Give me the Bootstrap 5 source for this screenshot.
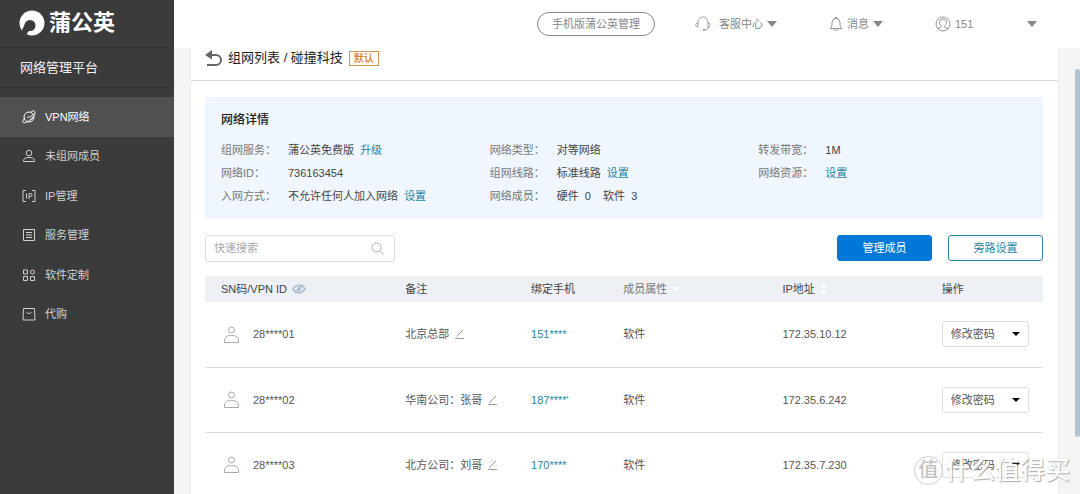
<!DOCTYPE html>
<html lang="zh-CN">
<head>
<meta charset="utf-8">
<meta name="viewport" content="width=device-width, initial-scale=1">
<title>蒲公英 网络管理平台</title>
<link href="https://cdn.jsdelivr.net/npm/bootstrap@5.3.0/dist/css/bootstrap.min.css" rel="stylesheet">
<style>
body{font-family:"Liberation Sans","Noto Sans CJK SC",sans-serif;font-size:11px;line-height:16px;color:#555;background:#f4f4f4}
svg{flex:none;fill:none}
svg:not([stroke]){stroke:currentColor}
a{color:#2585a8;text-decoration:none}
.side{width:174px;background:#3b3b3b;color:#d0d0d0}
.brand-row{height:48px;padding-left:19px;padding-bottom:1px;border-bottom:1px solid #333;color:#fff;font-size:22px;font-weight:700;gap:4px}
.platform{height:40px;padding-left:20px;border-bottom:1px solid #333;color:#f2f2f2;font-size:13px;margin-bottom:9px}
.menu{display:grid;grid-auto-rows:1fr;height:237px}
.menu a{color:#d0d0d0;padding-left:22px;gap:9px;height:100%}
.menu a.active{background:#505050;color:#fff}
.topbar{height:48px;background:#fff;color:#888;padding-right:43px}
.topbar .btn{--bs-btn-font-size:11px;--bs-btn-padding-y:0;--bs-btn-padding-x:14px;--bs-btn-color:#888;--bs-btn-border-color:#888;line-height:22px}
.topbar a{color:#888}
.account{width:68px}
.tri{width:0;height:0;border:5px solid transparent;border-top:6px solid #888;border-bottom:0}
.sheet{background:#fff;border:solid #eaeaea;border-width:0 1px;min-width:0}
.crumb{height:33px;padding:0 16px 12px 14px;border-bottom:1px solid #ddd;font-size:13px;color:#222;gap:6px}
.crumb a{color:#222}
.tag{font-size:10px;line-height:13px;border:1px solid #dc9354;color:#d77a2c;font-weight:500;padding:0 4px}
.sheet-body{padding:16px 15px 0 14px}
.detail{background:#eff6fe;border-radius:3px;padding:14px 16px 12px;margin-bottom:16px}
.detail h2{font-size:12px;line-height:18px;color:#222;font-weight:500;margin-bottom:10px}
.detail dl{display:grid;grid-template-columns:67px 1fr;row-gap:1px;line-height:22px}
.detail dt{font-weight:400;color:#777}
.detail dd{margin:0;color:#444;white-space:pre}
.tools{margin-bottom:14px}
.find{width:190px;height:27px;border:1px solid #ddd;border-radius:3px;padding:0 10px 0 8px}
.find input{font-size:11px;padding:0;border:0;box-shadow:none!important;min-height:0}
.find input::placeholder{color:#aaa}
.act{--bs-btn-font-size:11px;--bs-btn-padding-y:0;--bs-btn-border-radius:3px;width:95px;line-height:24px}
.act.btn-primary{--bs-btn-bg:#0078d7;--bs-btn-border-color:#0078d7}
.act.btn-outline-primary{--bs-btn-color:#2585a8;--bs-btn-border-color:#2585a8}
.members{table-layout:fixed;--bs-table-color:#555;margin:0}
.members th,.members td{padding:0 0 0 16px;vertical-align:middle;white-space:nowrap}
.members th{height:26px;background:#edf0f4;color:#444;font-weight:400;border:0}
.members td{height:65px;border-bottom:1px solid #ddd}
.members th .d-flex{gap:5px}
.members td .d-flex{gap:6px}
.members .who{gap:14px!important;padding-left:3px}
.members select{width:87px;height:26px;font-size:11px;line-height:16px;color:#555;padding:0 20px 0 8px;border-color:#ddd;border-radius:3px;
--bs-form-select-bg-img:url("data:image/svg+xml,%3Csvg xmlns='http://www.w3.org/2000/svg' viewBox='0 0 8 8'%3E%3Cpath d='M0 2h8L4 6z'/%3E%3C/svg%3E");background-image:var(--bs-form-select-bg-img);background-size:8px 8px;background-position:right 8px center}
.rail{width:21px;padding-top:21px}
.thumb{width:5px;height:368px;border-radius:3px;background:#b2c3d1}
.stamp{right:10px;bottom:8px;color:#fff;font-size:25px;line-height:32px;font-weight:500;text-shadow:1px 1px 1px #aaa,0 0 1px #ccc;pointer-events:none;gap:2px}
.stamp span{width:29px;height:29px;line-height:26px;font-size:20px;text-align:center;border:1px solid #ccc;border-radius:50%;color:#c4c4c4;background:#fff;text-shadow:none}
</style>
</head>
<body class="overflow-hidden">
<div class="d-flex vh-100 overflow-hidden position-relative">
<nav class="side flex-shrink-0">
  <div class="brand-row d-flex align-items-center">
    <svg width="26" height="26" viewBox="0 0 26 26" stroke="none"><circle cx="13" cy="13" r="12.500" fill="#fff"/><circle cx="11" cy="15.500" r="5.500" fill="#3b3b3b"/><path d="M6 14L2 22L7 26L8.500 22.500L11 20z" fill="#3b3b3b"/></svg>
    <span>蒲公英</span>
  </div>
  <div class="platform d-flex align-items-center">网络管理平台</div>
  <ul class="menu list-unstyled mb-0">
    <li><a href="#" class="active d-flex align-items-center"><svg width="14" height="14" viewBox="0 0 14 14"><circle cx="7" cy="7" r="5"/><path d="M3 8C-1 12 1 14 5 12S14 4 13 2S10 1 9 2M5 7c2 1 5-1 6-3M8 10l3-2"/></svg>VPN网络</a></li>
    <li><a href="#" class="d-flex align-items-center"><svg width="14" height="14" viewBox="0 0 14 14"><circle cx="7" cy="4" r="2.800"/><path d="M1.500 12.500V11.500C2 9 4 8.500 7 8.500s5 .5 5.500 3v1z"/></svg>未组网成员</a></li>
    <li><a href="#" class="d-flex align-items-center"><svg width="14" height="14" viewBox="0 0 14 14"><path d="M4 1.500H1v11H4M10 1.500h3v11H10M4.500 4.500v5M7 10V4.500h1.500a1.500 1.500 0 0 1 0 3H7"/></svg>IP管理</a></li>
    <li><a href="#" class="d-flex align-items-center"><svg width="14" height="14" viewBox="0 0 14 14"><path d="M1.500 1.500h11v11h-11zM4 4.500h6M4 7h6M4 9.500h6"/></svg>服务管理</a></li>
    <li><a href="#" class="d-flex align-items-center"><svg width="14" height="14" viewBox="0 0 14 14"><path d="M1.500 2h4v4h-4zM1.500 8.500h4v4h-4zM8.500 8.500h4v4h-4z"/><circle cx="10.500" cy="4" r="2"/></svg>软件定制</a></li>
    <li><a href="#" class="d-flex align-items-center"><svg width="14" height="14" viewBox="0 0 14 14"><path d="M1.500 1.500h11l.5 11.500H1zM4.500 5c1 2 4 2 5 0"/></svg>代购</a></li>
  </ul>
</nav>
<div class="flex-grow-1 d-flex flex-column" style="min-width:0">
  <header class="topbar d-flex align-items-center justify-content-end flex-shrink-0">
    <button type="button" class="btn rounded-pill me-4">手机版蒲公英管理</button>
    <a href="#" class="d-flex align-items-center gap-1 ms-3"><svg width="16" height="16" viewBox="0 0 16 16" stroke-width=".8"><path d="M3 7V6a5 5 0 0 1 10 0v1M3 7c-3 0-3 4 0 4zM13 7c3 0 3 4 0 4zM13 11c0 2-1 3-3 3"/><path d="M8 14h2" stroke-width="1.500"/></svg><span class="ms-1">客服中心</span><i class="tri"></i></a>
    <a href="#" class="d-flex align-items-center gap-1 ms-5"><svg class="ms-1" width="14" height="16" viewBox="0 0 14 16" stroke-width=".9"><path d="M1 12.500h12c-2-1.500-2-3-2-6a4 4 0 0 0-8 0c0 3 0 4.500-2 6zM6 2.500V1.500h2v1M5 13c.5 2 3.500 2 4 0"/></svg><span>消息</span><i class="tri"></i></a>
    <a href="#" class="d-flex align-items-center gap-1 ms-5"><svg class="ms-1" width="16" height="16" viewBox="0 0 16 16" stroke-width=".9"><circle cx="8" cy="8" r="7"/><path d="M3 13c1-2 4-1 3.500-3C5 9 4.500 8 4.500 6.500a3.500 3.500 0 0 1 7 0C11.500 8 11 9 9.500 10c-.5 2 2.500 1 3.500 3"/></svg><span class="account">151</span><i class="tri"></i></a>
  </header>
  <div class="d-flex flex-grow-1 ps-3 overflow-hidden">
    <main class="sheet flex-grow-1">
      <div class="crumb d-flex align-items-center">
        <svg width="17" height="17" viewBox="0 0 17 17" stroke="#666" stroke-width="2"><path d="M3 5h8a4.500 4.500 0 0 1 0 10H2"/><path d="M7 0v9.500L0 5z" fill="#666" stroke="none"/></svg>
        <span><a href="#">组网列表</a> / 碰撞科技</span><span class="tag">默认</span>
      </div>
      <div class="sheet-body">
        <section class="detail">
          <h2>网络详情</h2>
          <div class="row gx-0">
            <div class="col-4"><dl class="mb-0"><dt>组网服务：</dt><dd>蒲公英免费版  <a href="#">升级</a></dd><dt>网络ID：</dt><dd>736163454</dd><dt>入网方式：</dt><dd>不允许任何人加入网络  <a href="#">设置</a></dd></dl></div>
            <div class="col-4"><dl class="mb-0"><dt>网络类型：</dt><dd>对等网络</dd><dt>组网线路：</dt><dd>标准线路  <a href="#">设置</a></dd><dt>网络成员：</dt><dd>硬件  0    软件  3</dd></dl></div>
            <div class="col-4"><dl class="mb-0"><dt>转发带宽：</dt><dd>1M</dd><dt>网络资源：</dt><dd><a href="#">设置</a></dd></dl></div>
          </div>
        </section>
        <div class="tools d-flex align-items-start gap-3">
          <div class="find d-flex align-items-center me-auto"><input type="text" class="form-control bg-transparent" placeholder="快速搜索" aria-label="快速搜索"><svg width="13" height="13" viewBox="0 0 13 13" stroke="#aaa"><circle cx="5.500" cy="5.500" r="4.500"/><path d="M9 9l3.500 3.500"/></svg></div>
          <button type="button" class="btn btn-primary act">管理成员</button>
          <button type="button" class="btn btn-outline-primary act">旁路设置</button>
        </div>
        <table class="table members">
          <colgroup><col style="width:22%"><col style="width:15%"><col style="width:11%"><col style="width:19%"><col style="width:19%"><col style="width:14%"></colgroup>
          <thead><tr>
            <th><div class="d-flex align-items-center">SN码/VPN ID<svg width="14" height="10" viewBox="0 0 14 10" stroke="#a9bccd" stroke-width="1.500"><path d="M1 5c3-5 9-5 12 0c-3 5-9 5-12 0z"/><circle cx="7" cy="5" r="1.500"/><path d="M3 9l8-8"/></svg></div></th>
            <th>备注</th><th>绑定手机</th>
            <th style="color:#777"><div class="d-flex align-items-center">成员属性<svg width="7" height="4" viewBox="0 0 7 4" stroke="none"><path fill="#fff" d="M0 0h7L3.500 4z"/></svg></div></th>
            <th><div class="d-flex align-items-center">IP地址<svg width="7" height="10" viewBox="0 0 7 10" stroke="none"><path fill="#fff" d="M0 4h7L3.500 0zM0 6h7L3.500 10z"/></svg></div></th>
            <th>操作</th>
          </tr></thead>
          <tbody id="rows"></tbody>
        </table>
      </div>
    </main>
    <div class="rail d-flex justify-content-end flex-shrink-0"><div class="thumb"></div></div>
  </div>
</div>
<div class="stamp position-absolute d-flex align-items-center"><span>值</span>什么值得买</div>
</div>
<script>
const members=[["28****01","北京总部","151****","172.35.10.12"],["28****02","华南公司：张哥","187****'","172.35.6.242"],["28****03","北方公司：刘哥","170****","172.35.7.230"]];
document.getElementById("rows").innerHTML=members.map(m=>`<tr>
<td><div class="who d-flex align-items-center"><svg width="15" height="17" viewBox="0 0 15 17" stroke="#aaa"><circle cx="7.500" cy="4" r="3"/><path d="M.5 16.500V14C1 10.500 4 9.500 7.500 9.500s6.500 1 7 4.500v2.500z"/></svg>${m[0]}</div></td>
<td><div class="d-flex align-items-center">${m[1]}<svg width="9" height="10" viewBox="0 0 9 10" stroke="#999"><path d="M0 9.500h9M1.500 7.500L8 1"/></svg></div></td>
<td><a href="#">${m[2]}</a></td><td>软件</td><td>${m[3]}</td>
<td><select class="form-select" aria-label="操作 ${m[0]}"><option>修改密码</option></select></td></tr>`).join("");
</script>
<script src="https://cdn.jsdelivr.net/npm/bootstrap@5.3.0/dist/js/bootstrap.bundle.min.js"></script>
</body>
</html>
